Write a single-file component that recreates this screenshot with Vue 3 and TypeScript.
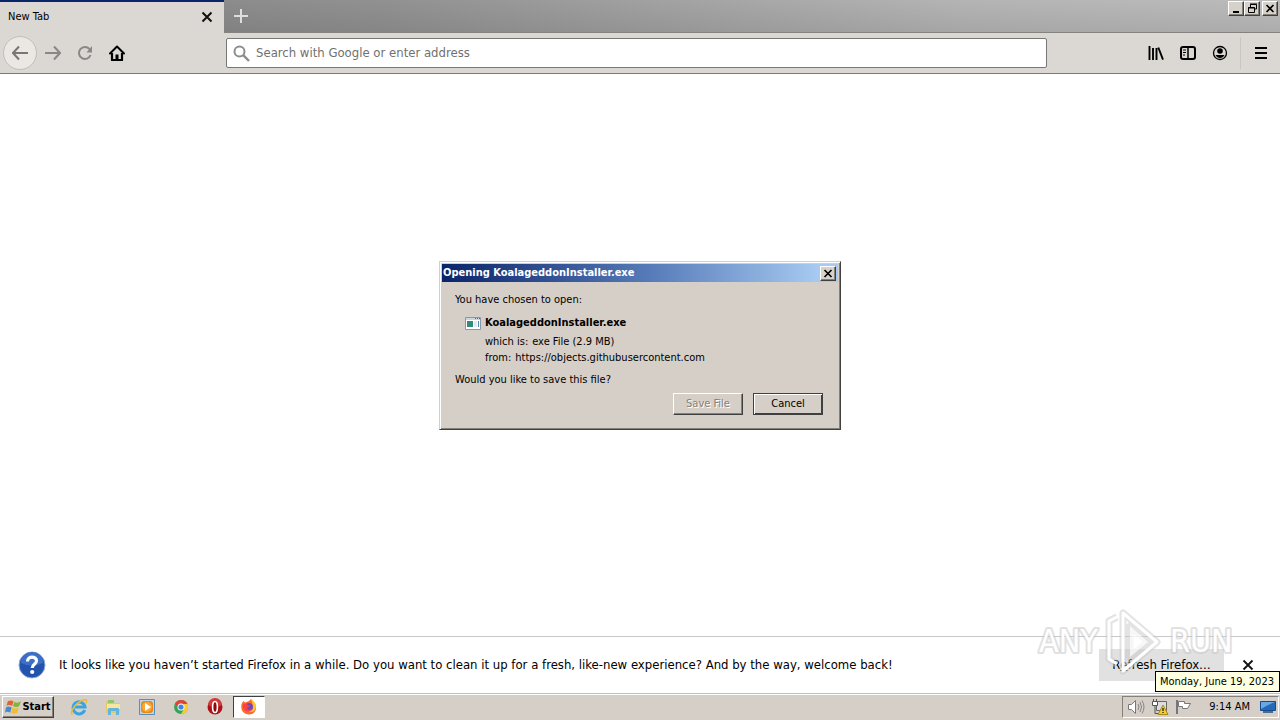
<script setup lang="ts">
import { ref } from 'vue'

const address = ref('')
const dialogOpen = ref(true)
const noticeOpen = ref(true)
const fileName = 'KoalageddonInstaller.exe'
</script>

<template>
  <div class="desktop">
    <div class="browser">
      <header class="tabs">
        <div class="tab">
          <span>New Tab</span>
          <button class="plain" aria-label="Close tab">
            <svg width="12" height="12" viewBox="0 0 12 12"><path d="M1.500 1.500l9 9M10.500 1.500l-9 9" stroke="#111" stroke-width="2" /></svg>
          </button>
        </div>
        <button class="plain newtab" aria-label="New tab">
          <svg width="14" height="14" viewBox="0 0 14 14"><path d="M7 0v14M0 7h14" stroke="#dedede" stroke-width="2" /></svg>
        </button>
        <div class="winctl">
          <button class="raised" aria-label="Minimize"><svg width="14" height="11" viewBox="0 0 14 11"><path d="M4 8h6v2H4z" /></svg></button>
          <button class="raised" aria-label="Restore"><svg width="14" height="11" viewBox="0 0 14 11"><path d="M5.500 4V1.500h6V6H9M5 1h7M3.500 4.500h6v5h-6zM3 5h7" fill="none" stroke="#000" /></svg></button>
          <button class="raised last" aria-label="Close"><svg width="14" height="11" viewBox="0 0 14 11"><path d="M3.500 2l7 7M10.500 2l-7 7" stroke="#000" stroke-width="1.700" /></svg></button>
        </div>
      </header>

      <nav class="toolbar">
        <div class="left">
          <button class="plain back" aria-label="Back">
            <svg width="16" height="16" viewBox="0 0 16 16"><path d="M16 8H1M7 1.500L1 8l6 6.500" fill="none" stroke="#777" stroke-width="2" /></svg>
          </button>
          <button class="plain tool" aria-label="Forward">
            <svg width="16" height="16" viewBox="0 0 16 16"><path d="M0 8h15M9 1.500L15 8l-6 6.500" fill="none" stroke="#8a8885" stroke-width="2" /></svg>
          </button>
          <button class="plain tool" aria-label="Reload">
            <svg width="16" height="16" viewBox="0 0 16 16"><path d="M12.500 4A6 6 0 1 0 13.600 10" fill="none" stroke="#8a8885" stroke-width="2" /><path d="M15 1v6.500H9.500z" fill="#8a8885" /></svg>
          </button>
          <button class="plain tool" aria-label="Home">
            <svg width="16" height="16" viewBox="0 0 16 16"><path d="M1 8.500L8 1.500l7 7" fill="none" stroke="#000" stroke-width="2" stroke-linecap="round" stroke-linejoin="round" /><path d="M3 8v7h10V8" fill="none" stroke="#000" stroke-width="2.200" stroke-linejoin="round" /><path d="M6.500 15V9.500h3V15z" /></svg>
          </button>
        </div>
        <label class="address">
          <svg width="17" height="17" viewBox="0 0 17 17"><circle cx="6.500" cy="6.500" r="5" fill="none" stroke="#8d8d8d" stroke-width="2" /><path d="M10.200 10.200l5.800 5.800" stroke="#8d8d8d" stroke-width="2.400" /></svg>
          <input v-model="address" type="text" placeholder="Search with Google or enter address" aria-label="Search with Google or enter address" />
        </label>
        <div class="right">
          <button class="plain tool" aria-label="Library">
            <svg width="16" height="16" viewBox="0 0 16 16"><path d="M1.500 1v14M5 3v12M8.500 3v12M10.300 2.500L15 14.700" fill="none" stroke="#000" stroke-width="1.900" /></svg>
          </button>
          <button class="plain tool" aria-label="Sidebars">
            <svg width="16" height="14" viewBox="0 0 16 14"><rect x="1" y="1" width="14" height="12" rx="2" fill="none" stroke="#000" stroke-width="2" /><path d="M8 1v12" stroke="#000" stroke-width="1.500" /><path d="M3 4h3M3 6.500h3M3 9h2" stroke="#000" /></svg>
          </button>
          <button class="plain tool" aria-label="Account">
            <svg width="16" height="16" viewBox="0 0 16 16"><circle cx="8" cy="8" r="6.500" fill="none" stroke="#000" stroke-width="1.300" /><circle cx="8" cy="6" r="2.800" /><path d="M3.500 10h9Q11 13 8 13T3.500 10z" /></svg>
          </button>
          <i class="divider"></i>
          <button class="plain tool" aria-label="Menu">
            <svg width="12" height="12" viewBox="0 0 12 12"><path d="M0 1h12M0 6h12M0 11h12" stroke="#000" stroke-width="2" /></svg>
          </button>
        </div>
      </nav>

      <main class="page"></main>

      <section v-if="noticeOpen" class="notice">
        <svg width="28" height="28" viewBox="0 0 28 28"><circle cx="14" cy="14" r="13" fill="#2453ae" stroke="#8fa8d4" /><path d="M3 12a11 11 0 0 1 22 0Q14 17 3 12z" fill="#3c6fc8" /><path d="M9.500 10.500C9.500 4.500 18.700 5 18.500 10c-.1 3.200-4.300 3.400-4.300 7" fill="none" stroke="#fff" stroke-width="3.200" /><circle cx="14.200" cy="21" r="2.100" fill="#fff" /></svg>
        <span class="message">It looks like you haven’t started Firefox in a while. Do you want to clean it up for a fresh, like-new experience? And by the way, welcome back!</span>
        <button class="refresh">R<u>e</u>fresh Firefox…</button>
        <button class="plain" aria-label="Dismiss" @click="noticeOpen = false">
          <svg width="12" height="12" viewBox="0 0 12 12"><path d="M1.500 1.500l9 9M10.500 1.500l-9 9" stroke="#111" stroke-width="1.800" /></svg>
        </button>
      </section>

      <div v-if="dialogOpen" class="overlay">
        <div class="dialog" role="dialog" aria-labelledby="dialog-title">
          <div class="titlebar">
            <span id="dialog-title">Opening {{ fileName }}</span>
            <button class="raised" aria-label="Close dialog" @click="dialogOpen = false"><svg width="14" height="11" viewBox="0 0 14 11"><path d="M3.500 2l7 7M10.500 2l-7 7" stroke="#000" stroke-width="1.700" /></svg></button>
          </div>
          <div class="dialog-body">
            <p>You have chosen to open:</p>
            <div class="file">
              <svg width="16" height="13" viewBox="0 0 16 13"><path d="M.5.500h15v12H.5z" fill="#fff" stroke="#8a98a5" /><path d="M1 1h14v2H1z" fill="#c8d6e2" /><path d="M10 1.500h1M12 1.500h1M14 1.500h1" stroke="#567" /><path d="M2 4h6v6H2z" fill="#338a78" /><path d="M9 5h3M9 7h3M9 9h3" stroke="#ccd5dd" /><path d="M13 4h1v6h-1z" fill="#5788b5" /></svg>
              <strong>{{ fileName }}</strong>
            </div>
            <dl>
              <div><dt>which is:</dt><dd>exe File (2.9 MB)</dd></div>
              <div><dt>from:</dt><dd>https://objects.githubusercontent.com</dd></div>
            </dl>
            <p>Would you like to save this file?</p>
            <div class="actions">
              <button class="push" disabled>Save File</button>
              <button class="push default" @click="dialogOpen = false">Cancel</button>
            </div>
          </div>
        </div>
      </div>
    </div>

    <footer class="taskbar">
      <button class="start">
        <svg width="17" height="16" viewBox="0 0 18 16"><path d="M3 2q3-2 6 0L7.500 7q-3-2-6 0z" fill="#e2632c" /><path d="M10 2.500q3 2 7-.5L15 7q-3 2-6.500 0z" fill="#83b43c" /><path d="M1 8.500q3-2 6 0L5.500 14q-3-2-5.500 0z" fill="#468bd0" /><path d="M8 8.500q3 2 6.500 0L13 14q-3 2-6.500 0z" fill="#f1bd34" /></svg>
        <span>Start</span>
      </button>
      <div class="launch">
        <button class="plain" aria-label="Internet Explorer">
          <svg width="18" height="18" viewBox="0 0 18 18"><path d="M14.700 12A6 6 0 1 1 15 9H5" fill="none" stroke="#39a5de" stroke-width="3" /><path d="M2.500 16.500C-1 14 6 5 12 2.500c4-1.800 5.500-.5 4 2.500" fill="none" stroke="#e8b93f" stroke-width="1.500" /></svg>
        </button>
        <button class="plain" aria-label="Windows Explorer">
          <svg width="18" height="18" viewBox="0 0 18 18"><path d="M2 3h5l1 2h8v10H2z" fill="#e7c766" /><path d="M4 2h6v3H4z" fill="#91c66b" /><path d="M3 6h13v5H3z" fill="#f8e6a0" /><path d="M4 17v-6q0-1 1-1h9q1 0 1 1v6h-3v-4H7v4z" fill="#62b5df" /></svg>
        </button>
        <button class="plain" aria-label="Media Player">
          <svg width="18" height="18" viewBox="0 0 18 18"><path d="M1.500 1.500h15v15h-15z" fill="#b9d8ef" stroke="#568ebc" /><rect x="3" y="3" width="12" height="12" rx="3" fill="#ef8716" /><circle cx="9" cy="9" r="5" fill="#f9a735" /><path d="M7 5l6 4-6 4z" fill="#fff" /></svg>
        </button>
        <button class="plain" aria-label="Chrome">
          <svg width="18" height="18" viewBox="0 0 18 18"><circle cx="9" cy="9" r="7" fill="#35a554" /><path d="M3 5.500A7 7 0 0 1 15.500 6H9L6.500 10.500z" fill="#df4537" /><path d="M15.500 6A7 7 0 0 1 9 16l3-5V6z" fill="#f7cc38" /><circle cx="9" cy="9" r="3.500" fill="#fff" /><circle cx="9" cy="9" r="2.600" fill="#3e83e5" /></svg>
        </button>
        <button class="plain" aria-label="Opera">
          <svg width="18" height="18" viewBox="0 0 18 18"><circle cx="9" cy="9" r="7.500" fill="#a91419" /><path d="M2 7a7 7 0 0 1 14 0q-7 4-14 0z" fill="#d4393b" /><ellipse cx="9" cy="9" rx="2.400" ry="5.500" fill="#8e080d" stroke="#fff" stroke-width="1.600" /></svg>
        </button>
        <button class="active" aria-label="Firefox">
          <svg width="18" height="18" viewBox="0 0 18 18"><path d="M2 5l1.500-2L5 4.500 9 3 11 1q1 2 3 3.500C18 9 16 16.500 9 16.500S0 10 2 5z" fill="#f86b31" /><path d="M11 1c6 4 6 9 3 12q-3 2-6 0c6 0 5-6 3-12z" fill="#ffc531" /><circle cx="9" cy="9" r="4" fill="#7545bd" /><path d="M3 6q3-1 5 1l2 1-3 2q1 3 5 1-2 4-6 2T3 6z" fill="#f94246" /></svg>
        </button>
      </div>
      <div class="tray">
        <svg width="18" height="16" viewBox="0 0 18 16"><path d="M1.500 5.500h3L8.500 1.500v13L4.500 10.500h-3z" fill="#fff" stroke="#777" /><path d="M11 5q2 3 0 6M13 3q3 5 0 10M15 1.500q4 6.500 0 13" fill="none" stroke="#858585" /></svg>
        <svg width="18" height="16" viewBox="0 0 18 16"><path d="M5.500 2.500h10v9h-10z" fill="#ddd" stroke="#666" /><path d="M1.500 2.500h5v4h-5z" fill="#fff" stroke="#555" /><path d="M2.500 0v3M5.500 0v3M4 7v7.500h6" fill="none" stroke="#555" /><path d="M12 6l5 9.500H7z" fill="#f5cf21" stroke="#aa8918" /><path d="M12 9v3M12 13v1" stroke="#222" stroke-width="1.300" /></svg>
        <svg width="18" height="16" viewBox="0 0 18 16"><path d="M2 1v14" stroke="#777" stroke-width="2" /><path d="M3.500 2.500h6v2h6l-3 5h-5v-2h-4z" fill="#fff" stroke="#777" /></svg>
        <time>9:14 AM</time>
        <svg class="monitor" width="16" height="14" viewBox="0 0 16 14"><path d="M.5 1.500h15v9H.5z" fill="#2569b7" stroke="#164b8c" /><path d="M1 2h14Q9 4 1 9z" fill="#67a8e5" /><path d="M3 12h10" stroke="#4a6e91" stroke-width="2" /></svg>
      </div>
    </footer>

    <svg class="watermark" width="204" height="72" viewBox="0 0 204 72" role="img" aria-label="ANY RUN">
      <g class="mark">
        <text x="5" y="46">ANY</text>
        <text x="136" y="46">RUN</text>
      </g>
      <g fill="none" stroke-linejoin="round">
        <path d="M83 11l-8 4v38l8 5M89 7v58l34-29zM96 20l18 16-18 15z" stroke="#c8c8c8" stroke-opacity=".5" stroke-width="7" />
        <path d="M83 11l-8 4v38l8 5M89 7v58l34-29z" stroke="#fff" stroke-width="3" />
        <path d="M96 20l18 16-18 15z" fill="#fff" fill-opacity=".7" />
      </g>
    </svg>
    <div class="tooltip" role="tooltip">Monday, June 19, 2023</div>
  </div>
</template>

<style>
body { margin: 0; }
</style>

<style scoped>
* { box-sizing: border-box; }
.desktop { position: relative; display: flex; flex-direction: column; min-height: 100vh; overflow: hidden; background: #fff; color: #000; font: 11px/16px "DejaVu Sans Condensed", "DejaVu Sans", sans-serif; }
button, input { font: inherit; color: inherit; }
button { display: inline-flex; align-items: center; justify-content: center; padding: 0; }
svg { display: block; flex: none; }
p, dl, dd { margin: 0; }
.plain { border: 0; background: none; }
.browser { position: relative; flex: 1; display: flex; flex-direction: column; }
.tabs { display: flex; height: 33px; background: linear-gradient(180deg, transparent, rgba(0, 0, 0, .08)), linear-gradient(90deg, #858585, #919191 30%, #b4b4b4 75%, #bbb); border-bottom: 1px solid #85837f; }
.tab { display: flex; align-items: center; justify-content: space-between; width: 224px; height: 33px; padding: 0 11px 1px 8px; background: #dbd7d2; border-top: 2px solid #0a246a; }
.newtab { width: 34px; height: 32px; }
.winctl { display: flex; margin: 1px 2px 0 auto; }
.raised { width: 16px; height: 15px; background: #d6d2cb; border: 1px solid; border-color: #fff #404040 #404040 #fff; box-shadow: inset -1px -1px #858078; }
.last { margin-left: 2px; }
.toolbar { display: flex; align-items: center; justify-content: space-between; height: 41px; background: #dbd7d2; border-bottom: 1px solid #7b7975; }
.left { display: flex; align-items: center; width: 226px; padding-left: 3px; }
.back { width: 34px; height: 34px; border: 1px solid #c1bdb8; border-radius: 50%; background: #ebe8e4; }
.tool { width: 32px; height: 32px; }
.address { flex: 1; display: flex; align-items: center; gap: 6px; height: 30px; padding: 0 6px; background: #fff; border: 1px solid #777; border-radius: 2px; }
.address input { flex: 1; min-width: 0; border: 0; outline: 0; padding: 0; background: none; font-size: 13px; }
.address input::placeholder { color: #707070; opacity: 1; }
.right { display: flex; align-items: center; justify-content: flex-end; width: 233px; padding-right: 3px; }
.divider { width: 1px; height: 32px; margin: 0 4px; background: #c9c5bf; }
.page { flex: 1; }
.notice { display: flex; align-items: center; height: 57px; padding: 0 26px 0 18px; border-top: 1px solid #c8c8c8; font-size: 13px; }
.message { margin-left: 13px; flex: 1; }
.refresh { width: 125px; height: 32px; margin-right: 18px; border: 0; background: #e1e1e1; }
.overlay { position: absolute; inset: 0; display: flex; align-items: center; justify-content: center; padding-bottom: 2px; }
.dialog { width: 402px; padding: 2px; background: #d5cfc8; border: 1px solid; border-color: #d5cfc8 #404040 #404040 #d5cfc8; box-shadow: inset 1px 1px #fff, inset -1px -1px #858078; }
.titlebar { display: flex; align-items: center; justify-content: space-between; height: 18px; padding: 0 2px 0 1px; color: #fff; font-weight: bold; background: linear-gradient(90deg, #0a246a, #567ab8 52%, #a6caf0 95%); }
.dialog-body { padding: 10px 15px 12px 13px; }
.file { display: flex; align-items: center; gap: 4px; padding: 7px 0 3px 10px; }
dl { padding: 0 0 6px 30px; }
dl div { display: flex; gap: 4px; }
.actions { display: flex; justify-content: flex-end; gap: 10px; margin-top: 5px; }
.push { width: 70px; height: 22px; background: #d5cfc8; border: 1px solid; border-color: #fff #404040 #404040 #fff; box-shadow: inset -1px -1px #858078; }
.push:disabled { color: #858078; text-shadow: 1px 1px #fff; }
.default { border-color: #404040; box-shadow: inset 1px 1px #fff, inset -1px -1px #404040; }
.taskbar { display: flex; align-items: center; height: 27px; padding: 0 1px 0 2px; background: #d5cfc8; border-top: 1px solid #c4c0b8; box-shadow: inset 0 1px #fff; }
.start { width: 52px; height: 22px; font-size: 11px; font-weight: bold; background: #d5cfc8; border: 1px solid; border-color: #fff #404040 #404040 #fff; box-shadow: inset -1px -1px #858078; }
.launch { display: flex; align-items: center; gap: 2px; margin-left: 9px; }
.launch .plain { width: 32px; height: 22px; }
.active { width: 32px; height: 22px; background: #fff; border: 1px solid; border-color: #404040 #fff #fff #404040; }
.tray { display: flex; align-items: center; gap: 6px; height: 22px; margin-left: auto; padding: 0 2px 0 4px; border: 1px solid; border-color: #858078 #fff #fff #858078; }
.tray time { margin-left: 10px; }
.monitor { margin-left: 4px; }
.tooltip { position: absolute; right: 0; bottom: 28px; padding: 2px 5px 1px 4px; background: #ffffe1; border: 1px solid #000; }
.watermark { position: absolute; right: 42px; bottom: 42px; pointer-events: none; font: 32px "DejaVu Sans Condensed", sans-serif; }
.mark { fill: #fff; stroke: #c8c8c8; stroke-opacity: .55; stroke-width: 4px; stroke-linejoin: round; paint-order: stroke; }
</style>
